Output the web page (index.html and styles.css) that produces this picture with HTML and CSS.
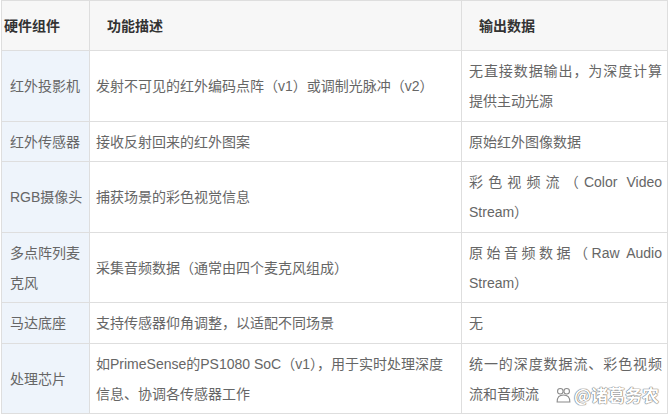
FILE: index.html
```html
<!DOCTYPE html>
<html lang="zh">
<head>
<meta charset="utf-8">
<link rel="stylesheet" href="styles.css">
</head>
<body>
<div class="wrap">
<table class="spec">
  <colgroup>
    <col class="c1"><col class="c2"><col class="c3">
  </colgroup>
  <thead>
    <tr><th class="h1">硬件组件</th><th class="h2">功能描述</th><th class="h3">输出数据</th></tr>
  </thead>
  <tbody>
    <tr><td class="name">红外投影机</td><td>发射不可见的红外编码点阵（v1）或调制光脉冲（v2）</td><td class="out">无直接数据输出，为深度计算提供主动光源</td></tr>
    <tr><td class="name">红外传感器</td><td>接收反射回来的红外图案</td><td class="out">原始红外图像数据</td></tr>
    <tr><td class="name">RGB摄像头</td><td>捕获场景的彩色视觉信息</td><td class="out">彩色视频流（Color Video Stream）</td></tr>
    <tr><td class="name">多点阵列麦克风</td><td>采集音频数据（通常由四个麦克风组成）</td><td class="out">原始音频数据（Raw Audio Stream）</td></tr>
    <tr><td class="name">马达底座</td><td>支持传感器仰角调整，以适配不同场景</td><td class="out">无</td></tr>
    <tr><td class="name">处理芯片</td><td>如PrimeSense的PS1080 SoC（v1），用于实时处理深度信息、协调各传感器工作</td><td class="out">统一的深度数据流、彩色视频流和音频流</td></tr>
  </tbody>
</table>
<div class="mark">
  <svg class="mark-icon" width="17" height="16" viewBox="0 0 16 15">
    <g fill="#fff" stroke="#8a8a8a" stroke-width="1">
      <circle cx="5" cy="4" r="2.6"/>
      <circle cx="11" cy="4" r="2.6"/>
      <path d="M2 14 C2 9 5 7.5 8 7.5 C11 7.5 14 9 14 14 Z"/>
    </g>
  </svg>
  <span class="mark-text">@诸葛务农</span>
</div>
</div>
</body>
</html>
```
FILE: styles.css
```css
html, body {
  margin: 0;
  padding: 0;
  background: #ffffff;
}
.wrap {
  position: relative;
  width: 672px;
  height: 416px;
  overflow: hidden;
}
.spec {
  margin-left: 1px;
  border-collapse: collapse;
  table-layout: fixed;
  width: 666px;
  font-family: "Liberation Sans", "Noto Sans CJK SC", sans-serif;
  font-size: 14px;
  color: #666666;
}
.c1 { width: 88px; }
.c2 { width: 372px; }
.c3 { width: 206px; }
.spec th, .spec td {
  border: 1px solid #dedede;
  vertical-align: middle;
  line-height: 30px;
}
.spec th {
  background: #f7f7f7;
  color: #333;
  font-weight: bold;
  text-align: left;
  padding: 10px 8px 9px 17px;
  line-height: 30px;
}
.spec th.h1 { padding-left: 2px; }
.spec td {
  padding: 5px 6px 4.5px 6px;
  text-align: left;
}
.spec td.name {
  background: #eef4fb;
  padding-left: 8px;
}
.spec td.out {
  text-align: justify;
  padding-left: 7px;
  padding-right: 5px;
}
.mark {
  position: absolute;
  left: 555px;
  top: 384px;
  display: flex;
  align-items: center;
  gap: 2px;
}
.mark-text {
  font-family: "Noto Sans CJK SC", sans-serif;
  font-size: 17px;
  font-weight: bold;
  color: #ffffff;
  line-height: 22px;
  text-shadow: 0 0 1px #6f6f6f, 0 0 1px #6f6f6f, 0 0 1px #6f6f6f;
}
```
